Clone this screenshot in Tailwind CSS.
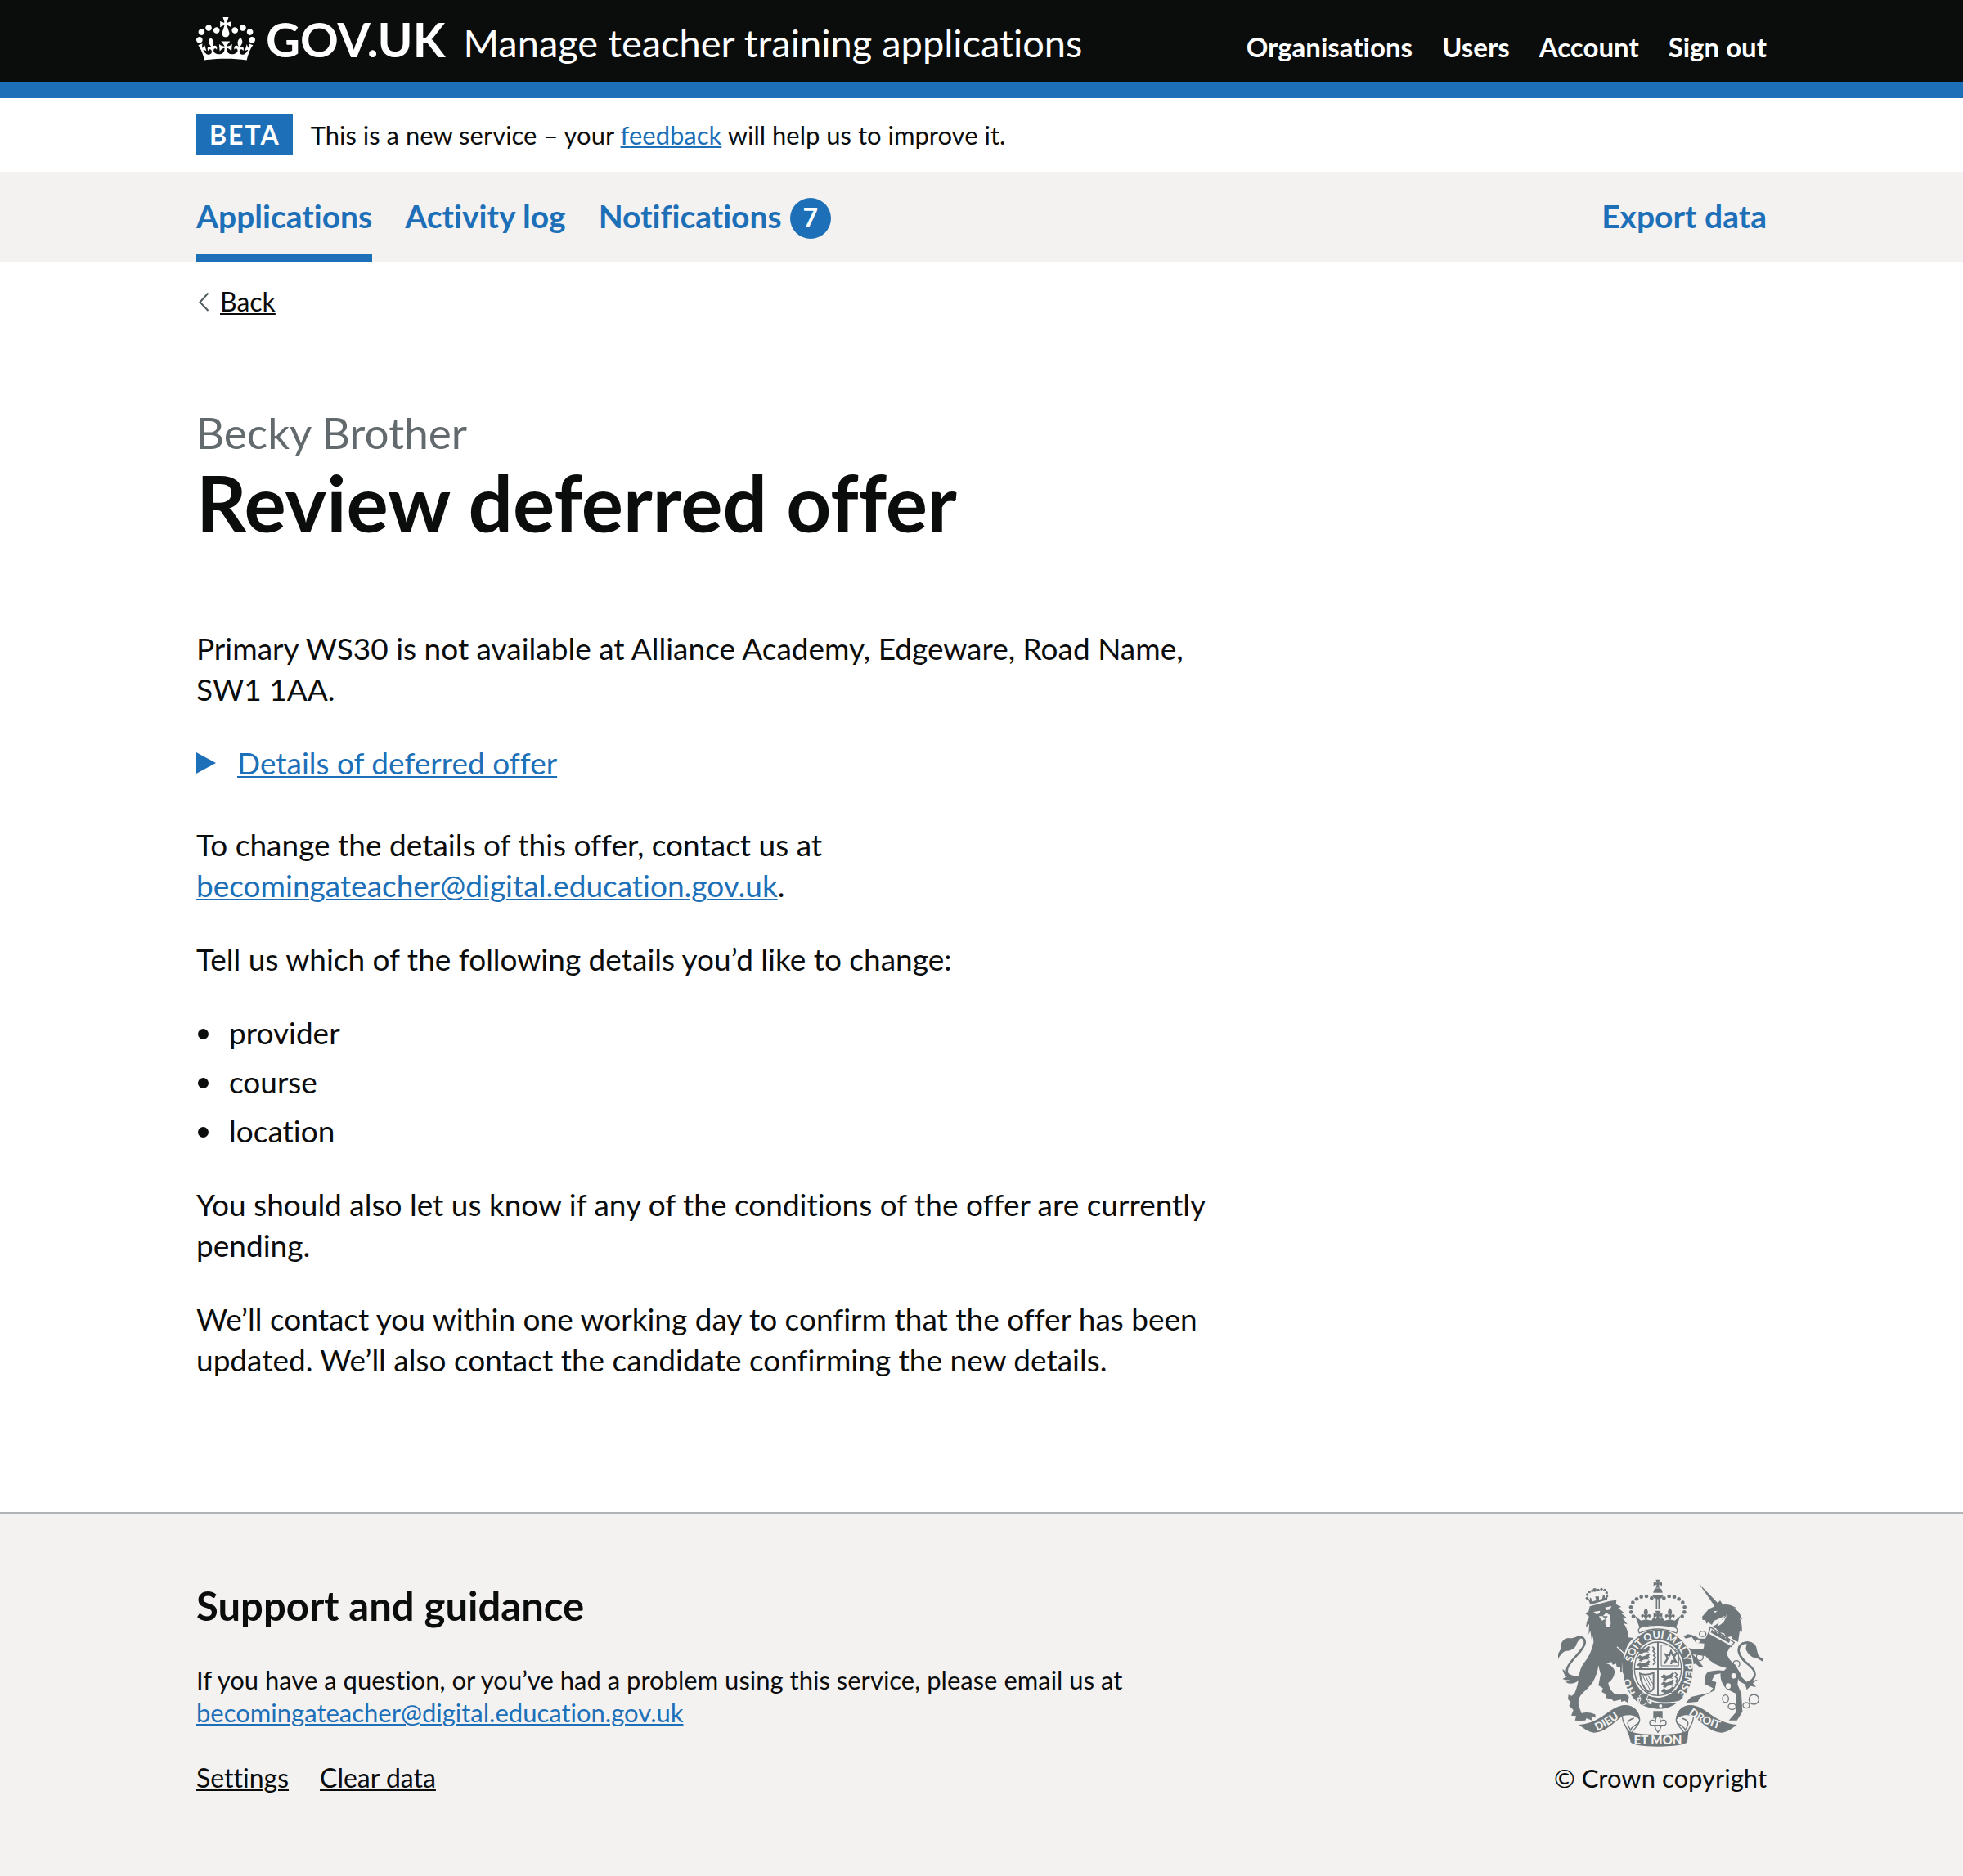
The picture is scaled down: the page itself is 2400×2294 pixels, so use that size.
<!DOCTYPE html>
<html lang="en">
<head>
<meta charset="utf-8">
<meta name="viewport" content="width=device-width, initial-scale=1">
<title>Review deferred offer - Manage teacher training applications - GOV.UK</title>
<script src="https://cdn.jsdelivr.net/npm/@tailwindcss/browser@4"></script>
</head>
<body class="bg-white font-['Lato',sans-serif] text-[#0b0c0c] [font-variant-ligatures:none]">

<header class="bg-[#0b0c0c] text-white">
  <div class="mx-auto flex h-[100px] w-4/5 items-baseline justify-between pt-[18px]">
    <div class="flex items-baseline">
      <a href="#" class="flex items-baseline gap-[13px] text-[58px] leading-[60px] font-bold">
        <svg class="mt-[3px] h-[53px] w-[72px] self-start" viewBox="0 0 132 97" fill="currentColor" aria-hidden="true">
          <path d="M25 30.2c3.5 1.5 7.7-.2 9.1-3.7 1.5-3.6-.2-7.8-3.9-9.2-3.6-1.4-7.6.3-9.1 3.9-1.4 3.5.3 7.5 3.9 9zM9 39.5c3.6 1.5 7.8-.2 9.2-3.7 1.5-3.6-.2-7.8-3.9-9.1-3.6-1.5-7.6.2-9.1 3.8-1.4 3.5.3 7.5 3.8 9zM4.4 57.2c3.5 1.5 7.7-.2 9.1-3.8 1.5-3.6-.2-7.7-3.9-9.1-3.5-1.5-7.6.3-9.1 3.8-1.4 3.5.3 7.6 3.9 9.1zm38.3-21.4c3.5 1.5 7.7-.2 9.1-3.8 1.5-3.6-.2-7.7-3.9-9.1-3.6-1.5-7.6.3-9.1 3.8-1.3 3.6.4 7.7 3.9 9.1zm64.4-5.6c-3.6 1.5-7.8-.2-9.1-3.7-1.5-3.6.2-7.8 3.8-9.2 3.6-1.4 7.7.3 9.2 3.9 1.3 3.5-.4 7.5-3.9 9zm15.9 9.3c-3.6 1.5-7.7-.2-9.1-3.7-1.5-3.6.2-7.8 3.7-9.1 3.6-1.5 7.7.2 9.2 3.8 1.5 3.5-.3 7.5-3.8 9zm4.7 17.7c-3.6 1.5-7.8-.2-9.2-3.8-1.5-3.6.2-7.7 3.9-9.1 3.6-1.5 7.7.3 9.2 3.8 1.3 3.5-.4 7.6-3.9 9.1zM89.3 35.8c-3.6 1.5-7.8-.2-9.2-3.8-1.4-3.6.2-7.7 3.9-9.1 3.6-1.5 7.7.3 9.2 3.8 1.4 3.6-.3 7.7-3.9 9.1zM69.7 17.7l8.9 4.7V9.3l-8.9 2.8c-.2-.3-.5-.6-.9-.9L72.4 0H59.6l3.5 11.2c-.3.3-.6.5-.9.9l-8.8-2.8v13.1l8.8-4.7c.3.3.6.7.9.9l-5 15.4v.1c-.2.8-.4 1.6-.4 2.4 0 4.1 3.1 7.5 7 8.1h.2c.3 0 .7.1 1 .1.4 0 .7 0 1-.1h.2c4-.6 7.1-4.1 7.1-8.1 0-.8-.1-1.7-.4-2.4V34l-5.1-15.4c.4-.2.7-.6 1-.9zM66 92.8c16.9 0 32.8 1.1 47.1 3.2 4-16.9 8.9-26.7 14-33.5l-9.6-3.4c1 4.9 1.1 7.2 0 10.2-1.5-1.4-3-4.3-4.2-8.7L108.6 76c2.8-2 5-3.2 7.5-3.3-4.4 9.4-10 11.9-13.6 11.2-4.3-.8-6.3-4.6-5.6-7.9 1-4.7 5.7-5.9 8-.5 4.3-8.7-3-11.4-7.6-8.8 7.1-7.2 7.9-13.5 2.1-21.1-8 6.1-8.1 12.3-4.5 20.8-4.7-5.4-12.1-2.5-9.5 6.2 3.4-5.2 7.9-2 7.2 3.1-.6 4.3-6.4 7.8-13.5 7.2-10.3-.9-10.9-8-11.2-13.8 2.5-.5 7.1 1.8 11 7.3L80.2 60c-4.1 4.4-8 5.3-12.3 5.4 1.4-4.4 8-11.6 8-11.6H55.5s6.4 7.2 7.9 11.6c-4.2-.1-8-1-12.3-5.4l1.4 16.4c3.9-5.5 8.5-7.7 10.9-7.3-.3 5.8-.9 12.8-11.1 13.8-7.2.6-12.9-2.9-13.5-7.2-.7-5 3.8-8.3 7.1-3.1 2.7-8.7-4.6-11.6-9.4-6.2 3.7-8.5 3.6-14.7-4.6-20.8-5.8 7.6-5 13.9 2.2 21.1-4.7-2.6-11.9.1-7.7 8.8 2.3-5.5 7.1-4.2 8.1.5.7 3.3-1.3 7.1-5.7 7.9-3.5.7-9-1.8-13.5-11.2 2.5.1 4.7 1.3 7.5 3.3l-4.7-15.4c-1.2 4.4-2.7 7.2-4.3 8.7-1.1-3-.9-5.3 0-10.2l-9.5 3.4c5 6.9 9.9 16.7 14 33.5 14.8-2.1 30.8-3.2 47.7-3.2z"/>
        </svg>
        <span>GOV.UK</span>
      </a>
      <a href="#" class="ml-[22px] text-[47px] leading-[60px]">Manage teacher training applications</a>
    </div>
    <nav aria-label="Account">
      <ul class="flex gap-9 text-[33px] leading-[40px] font-bold">
        <li><a href="#">Organisations</a></li>
        <li><a href="#">Users</a></li>
        <li><a href="#">Account</a></li>
        <li><a href="#">Sign out</a></li>
      </ul>
    </nav>
  </div>
  <div class="h-5 bg-[#1d70b8]"></div>
</header>

<div class="mx-auto flex w-4/5 items-center gap-[22px] py-5">
  <strong class="bg-[#1d70b8] pr-[15px] pl-4 text-[32px] leading-[50px] font-bold tracking-[2px] text-white">BETA</strong>
  <p class="text-[31px] leading-[40px]">This is a new service – your <a href="#" class="text-[#1d70b8] underline decoration-2 underline-offset-2">feedback</a> will help us to improve it.</p>
</div>

<nav aria-label="Primary" class="bg-[#f3f2f1] text-[39px] leading-[50px] font-bold text-[#1d70b8]">
  <div class="mx-auto flex w-4/5 items-start justify-between">
    <ul class="flex items-start gap-10">
      <li><a href="#" aria-current="page" class="block border-b-10 border-[#1d70b8] pt-[29px] pb-[21px]">Applications</a></li>
      <li><a href="#" class="block pt-[29px]">Activity log</a></li>
      <li><a href="#" class="flex items-start gap-[10px] pt-[29px]">Notifications
        <span class="mt-[3px] h-[50px] w-[50px] rounded-full bg-[#1d70b8] text-center text-[32px] leading-[48px] text-white">7</span></a></li>
    </ul>
    <a href="#" class="block pt-[29px]">Export data</a>
  </div>
</nav>

<div class="mx-auto w-4/5 pt-[29px]">
  <a href="#" class="inline-flex items-center gap-[14px] pl-[3px] align-top text-[32px] leading-[40px]">
    <svg class="h-6 w-3" viewBox="0 0 12 24" fill="none" stroke="#505a5f" stroke-width="2" aria-hidden="true"><path d="M11.500 1.500L1.500 12.500l10 10.500"/></svg>
    <span class="underline decoration-2 underline-offset-2">Back</span>
  </a>

  <main class="w-2/3 pt-[110px] pr-[30px] pb-[161px] text-[37px] leading-[50px]">
    <h1 class="mb-[104px] text-[96px] leading-[100px] font-bold">
      <span class="mb-[5px] block text-[53px] leading-[60px] font-normal text-[#626a6e]">Becky Brother</span>
      Review deferred offer
    </h1>
    <p class="mb-10">Primary WS30 is not available at Alliance Academy, Edgeware, Road Name, SW1 1AA.</p>
    <details class="group mb-[50px] text-[#1d70b8]">
      <summary class="flex list-none items-center gap-[26px]">
        <svg class="h-[26px] w-6" viewBox="0 0 24 26" fill="currentColor" aria-hidden="true"><path d="M0 0L24 13 0 26z"/></svg>
        <span class="underline decoration-2 underline-offset-2">Details of deferred offer</span>
      </summary>
      <p class="mt-5 hidden text-[#0b0c0c] group-open:block">Primary WS30 at Alliance Academy.</p>
    </details>
    <p class="mb-10">To change the details of this offer, contact us at <a href="#" class="text-[#1d70b8] underline decoration-2 underline-offset-2">becomingateacher@digital.education.gov.uk</a>.</p>
    <p class="mb-10">Tell us which of the following details you’d like to change:</p>
    <ul class="mb-10 flex flex-col gap-[10px]">
      <li class="flex gap-[25px] pl-[2px] before:mt-5 before:h-[13px] before:w-[13px] before:rounded-full before:bg-[#0b0c0c]">provider</li>
      <li class="flex gap-[25px] pl-[2px] before:mt-5 before:h-[13px] before:w-[13px] before:rounded-full before:bg-[#0b0c0c]">course</li>
      <li class="flex gap-[25px] pl-[2px] before:mt-5 before:h-[13px] before:w-[13px] before:rounded-full before:bg-[#0b0c0c]">location</li>
    </ul>
    <p class="mb-10">You should also let us know if any of the conditions of the offer are currently pending.</p>
    <p>We’ll contact you within one working day to confirm that the offer has been updated. We’ll also contact the candidate confirming the new details.</p>
  </main>
</div>

<footer class="border-t-2 border-[#b1b4b6] bg-[#f3f2f1] text-[31px] leading-[40px]">
  <div class="mx-auto flex w-4/5 items-end justify-between pt-20 pb-[103px]">
    <div>
      <h2 class="mb-[41px] text-[49px] leading-[60px] font-bold">Support and guidance</h2>
      <p class="mb-10">If you have a question, or you’ve had a problem using this service, please email us at<br>
        <a href="#" class="text-[#1d70b8] underline decoration-2 underline-offset-2">becomingateacher@digital.education.gov.uk</a></p>
      <ul class="flex gap-[38px] text-[32px]">
        <li><a href="#" class="underline decoration-2 underline-offset-2">Settings</a></li>
        <li><a href="#" class="underline decoration-2 underline-offset-2">Clear data</a></li>
      </ul>
    </div>
    <a href="#" class="flex flex-col items-center gap-[18px]">
      <svg class="h-[205px] w-[252px]" viewBox="69 88 756 615" fill="#6f777b" aria-hidden="true">
        <defs>
          <path id="motto" d="M343 394A99 114 0 0 1 537 400A99 114 0 0 1 480 528"/>
          <path id="motto-start" d="M356 506A100 114 0 0 1 336 430"/>
          <path id="dieu" d="M215 645Q268 622 322 576"/>
          <path id="droit" d="M550 583Q606 626 690 645"/>
          <g id="dots"><circle cx="415" cy="158" r="7"/><circle cx="396" cy="151" r="7"/><circle cx="377" cy="153" r="7"/><circle cx="360" cy="161" r="7"/><circle cx="346" cy="174" r="7"/><circle cx="339" cy="191" r="7"/><circle cx="340" cy="209" r="7"/><circle cx="348" cy="225" r="7"/></g>
          <g id="scroll">
            <path d="M308 590C306 622 328 628 330 656L342 660C338 640 372 630 371 602C366 570 348 556 322 552" fill="#f3f2f1" stroke="#6f777b" stroke-width="4"/>
            <path d="M148 622C230 618 262 552 318 550C352 550 372 576 371 606C362 588 336 582 308 590C272 620 240 652 204 651C182 648 166 636 148 622z"/>
            <path d="M371 606C370 622 342 624 338 642C326 622 318 608 350 598" fill="none" stroke="#6f777b" stroke-width="4"/>
          </g>
          <path id="lion-passant" d="M362 350l10-10 8 6 14-4 10-8 6 4-6 6 4 6-8 2 6 6-10-2-12 2-6 6-10-2 4-6-8-2z"/>
          <path id="fleur" d="M0-18C9-9 9 0 4 10C8 4 18 2 18 12C16 20 10 17 10 13C5 13 5 17 3 24H-3C-5 17-5 13-10 13C-10 17-16 20-18 12C-18 2-8 4-4 10C-9 0-9-9 0-18z"/>
        </defs>

        <!-- lion tail and body -->
        <path d="M156 450C118 456 98 444 106 414C116 384 166 352 170 322C171 304 156 296 140 304" fill="none" stroke="#6f777b" stroke-width="8"/>
        <path d="M160 297C138 296 128 308 108 304C88 308 80 324 82 344L72 362V382Q80 362 98 352Q128 352 138 332Q142 314 158 303z"/>
        <path d="M88 418C92 438 100 442 104 446L88 454Q100 460 116 458L100 466Q120 478 142 464L158 446Q126 446 110 434z"/>
        <path d="M188 188L262 168L286 165L284 180L304 190L292 194L314 212L302 212L326 232L308 230L326 254L312 250Q328 270 330 302L350 304Q332 316 322 342L314 364Q338 386 341 410L352 430L340 436L336 450L328 440L314 442L310 428L300 430V410L288 412L284 398L272 402L268 392L246 396Q274 402 280 428Q276 456 256 468Q258 490 278 508L302 512Q322 504 332 520L328 542L316 534L304 538L302 530L276 536L268 528L246 524L248 510L232 502L236 488L220 478L228 436Q222 418 220 404Q216 438 198 468Q180 490 160 508Q142 526 148 554L158 580Q180 572 208 584L210 596L194 594L196 606L176 598L172 606L150 608L134 606L138 590L120 588L128 568L112 552L118 540L108 528L110 512L122 516L132 508Q146 476 148 446Q152 414 168 394Q192 366 202 320L200 296L196 318L190 276L184 292L186 252L174 266Q176 240 186 226L172 214L184 206z"/>
        <path d="M178 150L190 182L252 164L254 142L244 158L242 146L236 148L234 160L222 164L222 152H208L212 166L198 170L192 156L188 158L190 168z"/>
        <g><circle cx="178" cy="158" r="5"/><circle cx="179" cy="145" r="5"/><circle cx="187" cy="135" r="5"/><circle cx="197" cy="131" r="5"/><circle cx="206" cy="128" r="7"/><circle cx="219" cy="128" r="5"/><circle cx="231" cy="125" r="5"/><circle cx="243" cy="128" r="5"/><circle cx="250" cy="138" r="5"/><circle cx="251" cy="150" r="5"/></g>
        <g fill="#f3f2f1"><path d="M202 208L226 204L224 214L212 217zM244 192L268 187L262 200L250 202zM222 224L236 224L248 212L262 220L264 236L242 236L234 240L226 232z"/><ellipse cx="255" cy="248" rx="10" ry="17"/></g>
        <path d="M234 224h20l-8 12z"/>
        <path d="M288 336Q310 356 324 372" stroke="#f3f2f1" stroke-width="4" fill="none"/>

        <!-- unicorn -->
        <path d="M762 470C806 452 800 424 768 400C738 376 718 340 752 322" fill="none" stroke="#6f777b" stroke-width="8"/>
        <path d="M742 328Q750 316 768 316Q800 320 802 352Q806 376 822 378V390Q806 378 784 374Q766 362 760 344L764 326z"/>
        <path d="M708 392Q738 420 744 446L764 466L804 456L786 470L798 484L778 480L764 494L758 474L736 462z"/>
        <path d="M588 104L662 180L648 190z"/>
        <path d="M666 166L676 182Q700 178 726 194L716 196Q738 206 742 224L748 236L738 232Q748 250 746 282L738 278L732 318L716 312L706 298L690 302L680 286L664 284L650 268L634 264Q664 252 684 222Q656 236 644 240L636 256L622 246L616 252L612 238L602 238L600 226L624 198L646 188Z"/>
        <path d="M642 206l14-2-8 8zM664 240Q684 236 690 216Q688 246 656 262z" fill="#f3f2f1"/>
        <path d="M626 276L704 334L690 360Q698 386 722 402Q736 430 732 454L730 474L744 508L748 574L728 606H698L726 574L724 508L688 490Q664 462 668 434L646 438L636 460L652 466L646 496L592 522L584 538L540 542L560 520L628 504L640 488L612 474Q606 440 622 428Q654 420 680 424L690 414Q640 404 612 370L566 364L588 388L606 412H592L576 398L566 402L560 380L542 354L548 340L574 346L606 342L608 324L578 322L562 300L540 306L532 298L548 290Q578 296 588 306L612 306Z"/>
        <path d="M630 264L718 320L706 336L624 290z" fill="#f3f2f1" stroke="#6f777b" stroke-width="4"/>
        <path d="M632 284l4-12 8 12 6-6 8 12 8-8 6 16 8-8 6 16 8-6 8 16-4 6z"/>
        <g fill="#f3f2f1"><ellipse cx="716" cy="443" rx="9" ry="10"/><ellipse cx="696" cy="480" rx="9" ry="10"/><circle cx="584" cy="316" r="7"/></g>
        <g fill="none" stroke="#6f777b" stroke-width="4"><ellipse cx="602" cy="289" rx="12" ry="10"/><ellipse cx="592" cy="374" rx="12" ry="13"/><ellipse cx="726" cy="399" rx="12" ry="12"/><ellipse cx="686" cy="527" rx="11" ry="14"/><ellipse cx="710" cy="555" rx="14" ry="11"/><ellipse cx="762" cy="551" rx="12" ry="10"/><circle cx="790" cy="529" r="18"/></g>

        <!-- garter and shield -->
        <ellipse cx="438" cy="420" rx="130" ry="149" stroke="#f3f2f1" stroke-width="5"/>
        <ellipse cx="438" cy="417" rx="94" ry="106" fill="#f3f2f1"/>
        <ellipse cx="438" cy="417" rx="86" ry="98" fill="none" stroke="#6f777b" stroke-width="4"/>
        <path d="M438 318V516M352 418H524" stroke="#6f777b" stroke-width="6"/>
        <use href="#lion-passant"/><use href="#lion-passant" y="26"/><use href="#lion-passant" y="52"/>
        <g stroke="#6f777b" stroke-width="5" fill="none"><path d="M418 336l8 8-6 8 8 8-6 8 8 8-8 8 6 8-8 10"/><path d="M450 330v76h64v-50L476 330z" stroke-width="3"/><path d="M462 398l12-20-8-14 14 4 6-16 6 14 12-4-8 14 8 14-14-2-4 12" stroke-width="7"/></g>
        <use href="#lion-passant" x="88" y="96"/><use href="#lion-passant" x="88" y="122"/><use href="#lion-passant" x="88" y="148"/>
        <path d="M500 430l8 8-6 8 8 8-6 8 6 8-10 8" fill="none" stroke="#6f777b" stroke-width="5"/>
        <g fill="none" stroke="#6f777b"><path d="M372 434Q392 444 422 432V488Q414 504 402 500Q376 480 372 434z" stroke-width="6"/><path d="M382 442L410 496M392 442L414 486M402 442L420 474" stroke-width="3"/></g>
        <g fill="#f3f2f1" font-family="Lato, sans-serif" font-weight="900" font-size="37">
          <text><textPath href="#motto">SOIT QUI MAL Y PENSE</textPath></text>
          <text><textPath href="#motto-start">HO</textPath></text>
        </g>
        <!-- lion paw over the garter -->
        <path d="M306 374L326 388L340 418L350 430L338 434L336 448L328 440L314 442L308 428z"/>
        <!-- buckle and strap -->
        <path d="M366 524L400 528Q440 548 500 540L520 536Q476 572 430 566Q390 560 366 546z" stroke="#f3f2f1" stroke-width="5"/>
        <path d="M384 504L404 512L396 528L404 540L380 552L368 544L376 528L370 516z" stroke="#f3f2f1" stroke-width="3"/>
        <g fill="#f3f2f1"><circle cx="410" cy="541" r="6"/><circle cx="448" cy="553" r="6"/></g>
        <path d="M421 572H455V600L438 590L421 600z"/>
        <g fill="#f3f2f1" stroke="#6f777b" stroke-width="4"><path d="M438 586Q450 600 446 614Q452 602 464 606Q472 616 464 624L452 624Q448 630 446 638L438 650L430 638Q428 630 424 624L412 624Q404 616 412 606Q424 602 430 614Q426 600 438 586z"/><path d="M424 624H452"/></g>

        <!-- imperial crown -->
        <path d="M430 90h15l-4 12 12-5v16l-12-5 4 12h-15l4-12-12 5v-16l12 5zM421 138Q422 126 430 122H446Q454 126 455 138zM417 146H458Q456 160 438 162Q420 160 417 146z"/>
        <path d="M433 160V196M442 160V196" stroke="#6f777b" stroke-width="5"/>
        <use href="#dots"/><use href="#dots" transform="translate(875) scale(-1 1)"/>
        <path d="M354 222L370 264Q438 250 505 264L521 222L500 240L482 236L462 240L454 228L438 240L422 228L414 240L394 236L376 240z"/>
        <use href="#fleur" x="394" y="212"/><use href="#fleur" x="482" y="212"/>
        <path d="M428 204H448L442 216L454 210V230L442 224L448 240H428L434 224L422 230V210L434 216z"/>
        <path d="M378 264Q438 250 498 264Q516 270 506 286Q438 256 370 286Q360 270 378 264z" fill="#f3f2f1" stroke="#6f777b" stroke-width="4"/>

        <!-- motto scroll -->
        <use href="#scroll"/><use href="#scroll" transform="translate(876) scale(-1 1)"/>
        <path d="M326 638Q336 658 438 658Q540 658 550 638L546 686Q526 702 438 702Q350 702 338 686z"/>
        <g fill="#f3f2f1" font-family="Lato, sans-serif" font-weight="900" font-size="40">
          <text x="438" y="694" text-anchor="middle" font-size="45">ET MON</text>
          <text><textPath href="#dieu">DIEU</textPath></text>
          <text><textPath href="#droit">DROIT</textPath></text>
        </g>
      </svg>
      <span>© Crown copyright</span>
    </a>
  </div>
</footer>

</body>
</html>
